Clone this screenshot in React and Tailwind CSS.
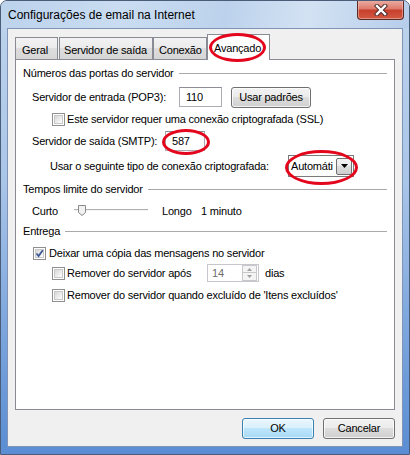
import React from "react";

const font = { fontFamily: '"Liberation Sans", Arial, sans-serif' };

function Checkbox({ checked }) {
  return (
    <div className="w-[13px] h-[13px] border border-[#8e8f8f] bg-white p-px shrink-0">
      <div className="w-full h-full border border-[#c9c9c9] bg-[linear-gradient(135deg,#d6d6d6_0%,#f2f2f2_70%,#ffffff_100%)] relative">
        {checked && (
          <svg width="9" height="9" viewBox="0 0 9 9" className="absolute -left-px -top-px">
            <path d="M1.5 4.5 L3.6 7 L7.8 1.2" stroke="#3d5a98" strokeWidth="1.8" fill="none" />
          </svg>
        )}
      </div>
    </div>
  );
}

function GroupHeader({ children, className = "" }) {
  return (
    <div className={"flex items-center h-[18px] pl-[7px] pr-[7px] " + className}>
      <span className="whitespace-nowrap">{children}</span>
      <div className="flex-1 h-px bg-[#a9a9a9] ml-[5px]" />
    </div>
  );
}

function Button({ children, className = "", primary }) {
  return (
    <div
      className={
        "h-[21px] rounded-[3px] border flex items-center justify-center " +
        (primary
          ? "border-[#3c7fb1] bg-[linear-gradient(to_bottom,#eaf6fd_0%,#d9f0fc_50%,#bee6fd_50%,#a7d9f5_100%)] shadow-[inset_0_0_0_1px_#ffffffaa] "
          : "border-[#707070] bg-[linear-gradient(to_bottom,#f2f2f2_0%,#ebebeb_50%,#dddddd_50%,#cfcfcf_100%)] shadow-[inset_0_0_0_1px_#ffffffbb] ") +
        className
      }
    >
      {children}
    </div>
  );
}

function Ellipse({ className }) {
  return <div className={"absolute z-20 rounded-[50%] border-[3px] border-[#e3061c] pointer-events-none " + className} />;
}

export default function App() {
  return (
    <div
      className="relative w-[410px] h-[455px] overflow-hidden rounded-t-[7px] border border-[#4a5c78] bg-[linear-gradient(to_bottom,#c3d8ef_0%,#bad1eb_8%,#a9c5e8_40%,#79a3dc_75%,#5a8dd3_100%)] text-[11px] text-black"
      style={font}
    >
      {/* title bar */}
      <div className="flex justify-between items-start h-[27px] bg-[linear-gradient(100deg,#bcd3ec_0%,#c9dcf1_30%,#bcd2ec_55%,#d3e2f3_75%,#b6cdea_100%)]">
        <div className="pl-[7px] pt-[6px] text-[12px] leading-[16px] text-black whitespace-nowrap">
          Configurações de email na Internet
        </div>
        <div className="mr-[5px] -mt-px w-[47px] h-[20px] rounded-b-[4px] border border-[#5b2a25] border-t-0 bg-[linear-gradient(to_bottom,#eab0a6_0%,#de7b6c_45%,#c8402d_55%,#d15a42_100%)] shadow-[inset_0_0_0_1px_#f3c4bb88] flex items-center justify-center">
          <svg width="14" height="12" viewBox="0 0 14 12">
            <path d="M3 2 L11 10 M11 2 L3 10" stroke="#4a2b2b" strokeWidth="4.4" strokeLinecap="square" />
            <path d="M3 2 L11 10 M11 2 L3 10" stroke="#ffffff" strokeWidth="2.4" strokeLinecap="square" />
          </svg>
        </div>
      </div>

      {/* client area */}
      <div className="ml-[6px] w-[396px] h-[419px] border border-[#7f94b6] bg-[#f0f0f0] tracking-[-0.2px]">
        <div className="pl-[7px] pt-[5px]">
          {/* tabs */}
          <div className="flex items-end h-[25px]">
            <div className="w-[43px] h-[22px] border border-b-0 border-[#898c95] bg-[linear-gradient(to_bottom,#f2f2f2_0%,#ebebeb_50%,#dddddd_50%,#d6d6d6_100%)] pl-[6px] pt-[4px] whitespace-nowrap">
              Geral
            </div>
            <div className="ml-px w-[94px] h-[22px] border border-b-0 border-[#898c95] bg-[linear-gradient(to_bottom,#f2f2f2_0%,#ebebeb_50%,#dddddd_50%,#d6d6d6_100%)] pl-[4px] pt-[4px] whitespace-nowrap">
              Servidor de saída
            </div>
            <div className="w-[54px] h-[22px] border border-b-0 border-[#898c95] bg-[linear-gradient(to_bottom,#f2f2f2_0%,#ebebeb_50%,#dddddd_50%,#d6d6d6_100%)] pl-[5px] pt-[4px] whitespace-nowrap">
              Conexão
            </div>
            <div className="relative z-10 -mb-px w-[63px] h-[26px] border border-b-0 border-[#898c95] bg-white pl-[6px] pt-[5px] whitespace-nowrap">
              Avançado
            </div>
          </div>

          {/* panel */}
          <div className="w-[380px] h-[351px] border border-[#898c95] bg-white pt-[4px]">
            <GroupHeader>Números das portas do servidor</GroupHeader>

            <div className="mt-[5px] h-[20px] flex items-center pl-[16px]">
              <span className="w-[147px] whitespace-nowrap">Servidor de entrada (POP3):</span>
              <div className="w-[43px] h-[20px] border border-[#abadb3] border-t-[#8b8e96] bg-white flex items-center pl-[6px]">110</div>
              <Button className="ml-[9px] w-[80px]">Usar padrões</Button>
            </div>

            <div className="mt-[2px] h-[20px] flex items-center pl-[36px]">
              <Checkbox />
              <span className="ml-[2px] whitespace-nowrap">Este servidor requer uma conexão criptografada (SSL)</span>
            </div>

            <div className="mt-[2px] h-[20px] flex items-center pl-[16px]">
              <span className="w-[133px] whitespace-nowrap">Servidor de saída (SMTP):</span>
              <div className="w-[40px] h-[20px] border border-[#abadb3] border-t-[#8b8e96] bg-white flex items-center pl-[6px]">587</div>
            </div>

            <div className="mt-[4px] h-[22px] flex items-center pl-[34px]">
              <span className="w-[238px] whitespace-nowrap">Usar o seguinte tipo de conexão criptografada:</span>
              <div className="w-[66px] h-[22px] border border-[#7a7a7a] bg-white flex items-center pl-[2px] pr-px">
                <span className="flex-1 whitespace-nowrap">Automáti</span>
                <div className="w-[16px] h-[17px] border border-[#707070] rounded-[2px] bg-[linear-gradient(to_bottom,#f2f2f2_0%,#ebebeb_50%,#dddddd_50%,#cfcfcf_100%)] flex items-center justify-center shrink-0">
                  <svg width="7" height="4" viewBox="0 0 7 4">
                    <path d="M0 0 L7 0 L3.5 4 Z" fill="#000" />
                  </svg>
                </div>
              </div>
            </div>

            <GroupHeader className="mt-[3px]">Tempos limite do servidor</GroupHeader>

            <div className="mt-[3px] h-[20px] flex items-center pl-[16px]">
              <span className="w-[42px]">Curto</span>
              <div className="relative w-[74px] h-[20px]">
                <div className="absolute left-0 right-0 top-[8px] h-[2px] border-t border-[#b0b0b0] border-b border-b-[#f4f4f4] bg-[#e6e6e6]" />
                <svg width="8" height="11" viewBox="0 0 8 11" className="absolute left-[4px] top-[4px]">
                  <path d="M0.5 0.5 H7.5 V7.5 L4 10.5 L0.5 7.5 Z" fill="#f1f1f1" stroke="#8a8a8a" />
                </svg>
              </div>
              <span className="ml-[14px] w-[39px]">Longo</span>
              <span className="whitespace-nowrap">1 minuto</span>
            </div>

            <GroupHeader className="mt-[1px]">Entrega</GroupHeader>

            <div className="mt-[3px] h-[20px] flex items-center pl-[17px]">
              <Checkbox checked />
              <span className="ml-[3px] whitespace-nowrap">Deixar uma cópia das mensagens no servidor</span>
            </div>

            <div className="h-[20px] flex items-center pl-[36px]">
              <Checkbox />
              <span className="ml-[2px] w-[140px] whitespace-nowrap">Remover do servidor após</span>
              <div className="w-[52px] h-[18px] border border-[#c5c7cc] bg-white flex items-center">
                <span className="flex-1 pl-[4px] text-[#6d6d6d]">14</span>
                <div className="w-[15px] h-[16px] flex flex-col mr-px">
                  <div className="h-[8px] border border-[#c8c8c8] bg-[#f4f4f4] flex items-center justify-center">
                    <svg width="5" height="3" viewBox="0 0 5 3"><path d="M0 3 L5 3 L2.5 0 Z" fill="#a0a0a0" /></svg>
                  </div>
                  <div className="h-[8px] border border-t-0 border-[#c8c8c8] bg-[#f4f4f4] flex items-center justify-center">
                    <svg width="5" height="3" viewBox="0 0 5 3"><path d="M0 0 L5 0 L2.5 3 Z" fill="#a0a0a0" /></svg>
                  </div>
                </div>
              </div>
              <span className="ml-[6px]">dias</span>
            </div>

            <div className="mt-[2px] h-[20px] flex items-center pl-[36px]">
              <Checkbox />
              <span className="ml-[2px] whitespace-nowrap">Remover do servidor quando excluído de 'Itens excluídos'</span>
            </div>
          </div>

          {/* buttons */}
          <div className="mt-[8px] w-[380px] flex justify-end gap-[9px]">
            <Button primary className="w-[72px]">OK</Button>
            <Button className="w-[72px]">Cancelar</Button>
          </div>
        </div>
      </div>

      <Ellipse className="left-[208px] top-[32px] w-[57px] h-[29px]" />
      <Ellipse className="left-[161px] top-[128px] w-[48px] h-[26px]" />
      <Ellipse className="left-[284px] top-[149px] w-[73px] h-[35px]" />
    </div>
  );
}
